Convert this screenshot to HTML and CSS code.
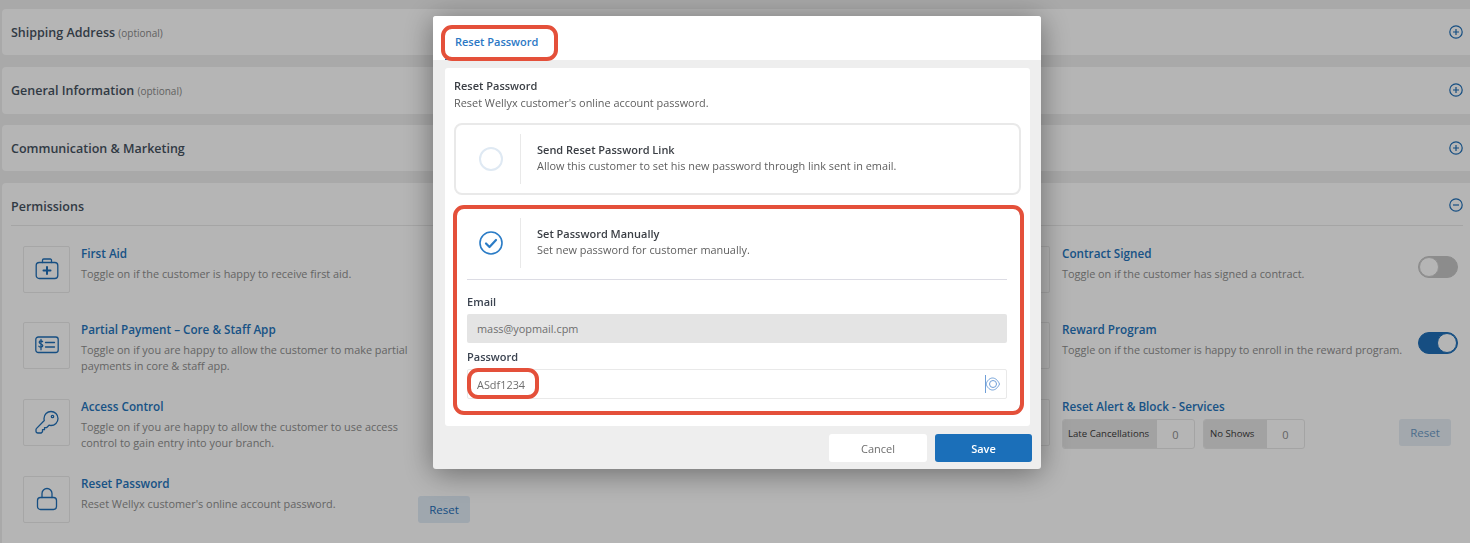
FILE: index.html
```html
<!DOCTYPE html>
<html lang="en">
<head>
<meta charset="utf-8">
<title>Reset Password</title>
<link rel="stylesheet" href="styles.css">
</head>
<body>
<main class="page">
  <section class="card card-a"><h2 class="card-title">Shipping Address <small>(optional)</small></h2>
    <svg class="circle-icon" viewBox="0 0 14 14"><circle cx="7" cy="7" r="6.2"/><path d="M7 4v6M4 7h6"/></svg></section>
  <section class="card card-b"><h2 class="card-title">General Information <small>(optional)</small></h2>
    <svg class="circle-icon" viewBox="0 0 14 14"><circle cx="7" cy="7" r="6.2"/><path d="M7 4v6M4 7h6"/></svg></section>
  <section class="card card-a"><h2 class="card-title">Communication &amp; Marketing</h2>
    <svg class="circle-icon" viewBox="0 0 14 14"><circle cx="7" cy="7" r="6.2"/><path d="M7 4v6M4 7h6"/></svg></section>
  <section class="card-perm">
    <div class="perm-head"><h2 class="card-title">Permissions</h2>
      <svg class="circle-icon" viewBox="0 0 14 14"><circle cx="7" cy="7" r="6.2"/><path d="M4 7h6"/></svg></div>
    <div class="perm-grid">
      <div class="perm">
        <div class="perm-box"><svg class="perm-icon" viewBox="0 0 24 24"><rect x="1.2" y="5.5" width="21.6" height="16" rx="3"/><path d="M7.5 5.5V3.2a1.2 1.2 0 0 1 1.2-1.2h6.6a1.2 1.2 0 0 1 1.2 1.2v2.3"/><path class="thick" d="M12 10v7M8.5 13.5h7"/></svg></div>
        <div class="perm-text"><h3>First Aid</h3><p>Toggle on if the customer is happy to receive first aid.</p></div>
      </div>
      <div></div>
      <div class="perm perm-right">
        <div class="perm-box"></div>
        <div class="perm-text"><h3>Contract Signed</h3><p>Toggle on if the customer has signed a contract.</p></div>
        <span class="toggle"><span class="knob"></span></span>
      </div>
      <div class="perm">
        <div class="perm-box"><svg class="perm-icon" viewBox="0 0 24 18"><rect x="0.8" y="1" width="22.4" height="15.5" rx="2.5"/><path d="M7.6 5.6C7 4.6 4.2 4.4 4.2 6.3c0 2.2 3.6 1.2 3.6 3.3 0 2-3 1.8-3.9.7M6 3.4v10.4M10.5 6.5h9M10.5 11h9"/></svg></div>
        <div class="perm-text"><h3>Partial Payment – Core &amp; Staff App</h3><p>Toggle on if you are happy to allow the customer to make partial payments in core &amp; staff app.</p></div>
      </div>
      <div></div>
      <div class="perm perm-right">
        <div class="perm-box"></div>
        <div class="perm-text"><h3>Reward Program</h3><p>Toggle on if the customer is happy to enroll in the reward program.</p></div>
        <span class="toggle toggle-on"><span class="knob"></span></span>
      </div>
      <div class="perm">
        <div class="perm-box"><svg class="perm-icon" viewBox="0 0 24 24"><path d="M9 8.5a7 7 0 1 1 7 7c-.7 0-1.4-.1-2-.3L11.500 17.700H9.500v2H7.500v2l-1.300 1.300H2.800A1.800 1.800 0 0 1 1 21.200v-1.500c0-.5.2-1 .6-1.300l7.700-7.900A7 7 0 0 1 9 8.500Z"/><circle cx="17.500" cy="6.500" r="1.200"/></svg></div>
        <div class="perm-text"><h3>Access Control</h3><p>Toggle on if you are happy to allow the customer to use access control to gain entry into your branch.</p></div>
      </div>
      <div></div>
      <div class="perm perm-right">
        <div class="perm-box"></div>
        <div class="perm-text perm-text-full"><h3>Reset Alert &amp; Block - Services</h3>
          <div class="counters">
            <div class="counter"><span class="counter-label">Late Cancellations</span><span class="counter-value">0</span></div>
            <div class="counter"><span class="counter-label counter-label-short">No Shows</span><span class="counter-value">0</span></div>
            <button class="reset reset-faded" type="button">Reset</button>
          </div>
        </div>
      </div>
      <div class="perm">
        <div class="perm-box"><svg class="perm-icon" viewBox="0 0 24 24"><rect x="2.500" y="10.500" width="19" height="12" rx="3"/><path d="M7 10.500V6.500a5 5 0 0 1 10 0v4"/></svg></div>
        <div class="perm-text"><h3>Reset Password</h3><p>Reset Wellyx customer's online account password.</p></div>
        <button class="reset reset-end" type="button">Reset</button>
      </div>
    </div>
  </section>
</main>

<div class="overlay">
  <div class="modal">
    <header class="modal-head">
      <span class="tab">Reset Password</span>
      <span class="mark mark-tab"></span>
    </header>
    <div class="modal-body">
      <div class="panel">
        <h4 class="panel-title">Reset Password</h4>
        <p class="panel-desc">Reset Wellyx customer's online account password.</p>
        <div class="option">
          <div class="option-row">
            <span class="radio"></span>
            <div class="option-text"><h5>Send Reset Password Link</h5><p>Allow this customer to set his new password through link sent in email.</p></div>
          </div>
        </div>
        <div class="option option-selected">
          <div class="option-row">
            <svg class="radio-checked" viewBox="0 0 24 24"><circle cx="12" cy="12" r="11"/><path class="check" d="M7 12.500l3.500 3.500 6.500-7"/></svg>
            <div class="option-text"><h5>Set Password Manually</h5><p>Set new password for customer manually.</p></div>
          </div>
          <div class="option-form">
            <label class="field-label">Email</label>
            <div class="input input-disabled">mass@yopmail.cpm</div>
            <label class="field-label">Password</label>
            <div class="input input-password">ASdf1234
              <svg class="eye" viewBox="0 0 15 18"><path d="M.5 0v18"/><path d="M1 9C4 1 11 1 14.500 9 11 17 4 17 1 9Z"/><circle cx="8" cy="9" r="3.500"/></svg>
              <span class="mark mark-value"></span>
            </div>
          </div>
          <span class="mark mark-option"></span>
        </div>
      </div>
    </div>
    <footer class="modal-foot">
      <button class="btn btn-cancel" type="button">Cancel</button>
      <button class="btn btn-save" type="button">Save</button>
    </footer>
  </div>
</div>
</body>
</html>
```
FILE: styles.css
```css
* { box-sizing: border-box; }
html, body { margin: 0; height: 100%; overflow: hidden; }
body { background: #eee; font-family: "Open Sans", "Noto Sans", sans-serif; font-size: 12px; color: #333; }
h2, h3, h4, h5, p { margin: 0; }

.page { height: 543px; overflow: hidden; padding: 9px 0 0 2px; display: flex; flex-direction: column; gap: 11.670px; }
.card { flex: none; background: #fff; border-radius: 4px 0 0 4px; display: flex; align-items: center; justify-content: space-between; padding: 0 7px 0 9px; }
.card .card-title { padding-top: 2px; }
.card-a { height: 46px; }
.card-b { height: 47px; }
.card-title { font-size: 12.500px; font-weight: 600; color: #46525f; line-height: 18px; }
.card-title small { font-size: 10px; font-weight: 400; color: #8a8a8a; }
.circle-icon { width: 14px; height: 14px; fill: none; stroke: #1f6fb8; stroke-width: 1.200; }

.card-perm { flex: none; height: 400px; background: #fff; border-radius: 4px 0 0 0; padding: 0 7px 0 9px; }
.perm-head { height: 43px; padding-top: 3px; border-bottom: 1px solid #e9e9e9; display: flex; align-items: center; justify-content: space-between; }
.perm-head .card-title { padding-top: 3px; }
.perm-grid { display: grid; grid-template-columns: repeat(3, 490px); grid-template-rows: 76px 77px 77px 77px; padding: 20px 0 0 12px; }
.perm { display: flex; align-items: flex-start; width: 447px; height: 47px; }
.perm-right { width: 455px; }
.perm-box { flex: none; width: 47px; height: 47px; margin-right: 11px; border: 1px solid #eaeaea; border-radius: 2px; display: flex; align-items: center; justify-content: center; }
.perm-right .perm-box { margin-right: 12px; }
.perm-icon { width: 24px; height: 24px; fill: none; stroke: #1f6fb8; stroke-width: 1.300; stroke-linecap: round; stroke-linejoin: round; }
.perm-icon .thick { stroke-width: 2; }
.perm-text { flex: 1; min-width: 0; max-width: 345px; }
.perm-text-full { max-width: none; }
.perm-text h3 { font-size: 11.700px; font-weight: 600; line-height: 15px; color: #2474bc; margin-bottom: 5px; }
.perm-text p { font-size: 10.900px; line-height: 16.400px; color: #8e8e8e; }

.toggle { flex: none; margin: 10px 0 0 auto; width: 40px; height: 22px; border-radius: 11px; background: #c6c6c6; border: 1px solid #c6c6c6; display: flex; }
.knob { width: 20px; height: 20px; border-radius: 50%; background: #fff; border: 1px solid #ccc; }
.toggle-on { background: #1f6fb8; border-color: #1f6fb8; justify-content: flex-end; }
.toggle-on .knob { border-color: #1f6fb8; }

.reset { flex: none; width: 52px; height: 27px; padding: 0; border: 0; border-radius: 3px; font: 400 11.500px "Open Sans", sans-serif; background: #e0ebf6; color: #1f6fb8; }
.reset-end { margin: 20px 0 0 auto; }
.reset-faded { margin-left: auto; margin-right: 7px; background: #e6edf4; color: #6d9bc6; }
.counters { display: flex; gap: 8px; align-items: flex-start; }
.counter { display: flex; height: 30px; border: 1px solid #e8e8e8; border-radius: 3px; overflow: hidden; }
.counter-label { width: 94px; background: #e4e4e4; padding-left: 5px; font-size: 9.600px; font-weight: 500; line-height: 27px; color: #3b3b3b; }
.counter-label-short { width: 63px; padding-left: 6px; }
.counter-value { width: 37px; text-align: center; line-height: 30px; font-size: 11px; color: #8e8e8e; }

.overlay { position: fixed; inset: 0; background: rgba(0, 0, 0, .29); }
.modal { position: absolute; left: 433px; top: 16px; width: 608px; height: 453px; background: #eee; border-radius: 3px; box-shadow: 0 4px 30px rgba(0, 0, 0, .42); }
.modal-head { position: relative; height: 44px; background: #fff; border-radius: 3px 3px 0 0; padding-left: 12px; }
.tab { display: inline-block; height: 44px; padding: 18px 10px 0 10px; border-bottom: 1px solid #1b6fb9; font-size: 11px; font-weight: 600; line-height: 16px; color: #2b78c5; }
.modal-body { padding: 8px 11px 0 12px; }
.panel { height: 358px; background: #fff; border-radius: 3px; padding: 10px 9px 0; }
.panel-title { font-size: 11px; font-weight: 600; line-height: 16px; color: #3b3f45; }
.panel-desc { font-size: 10.900px; line-height: 17px; color: #5e5e5e; }
.option { position: relative; margin-top: 12px; height: 72px; border: 2px solid #e9e9e9; border-radius: 8px; }
.option-row { display: flex; align-items: center; padding: 9px 0 0 23px; }
.radio { flex: none; width: 24px; height: 24px; border: 2px solid #dfe9f3; border-radius: 50%; }
.radio-checked { flex: none; width: 24px; height: 24px; fill: none; stroke: #2b7cc6; stroke-width: 1.600; stroke-linecap: round; stroke-linejoin: round; }
.radio-checked .check { stroke-width: 2.200; }
.option-text { margin-left: 17px; padding: 0 0 2px 16px; height: 50px; border-left: 1px solid #e9e9e9; display: flex; flex-direction: column; justify-content: center; }
.option-text h5 { font-size: 11px; font-weight: 600; line-height: 16px; color: #3b3f45; }
.option-text p { font-size: 10.900px; line-height: 16.500px; color: #5e5e5e; }
.option-selected { height: 206px; border-color: #fff #2b6fb5 #fff #fff; border-right-width: 1px; }
.option-form { margin: 11px 13px 0 11px; padding-top: 14px; border-top: 1px solid #dcdce4; }
.field-label { display: block; font-size: 11px; font-weight: 600; line-height: 16px; color: #3b4350; }
.input { position: relative; display: flex; align-items: center; justify-content: space-between; height: 29px; padding: 0 6px 0 10px; font-size: 10.900px; border-radius: 2px; color: #6e6e6e; }
.input-disabled { background: #e4e4e4; margin: 4px 0 6px; }
.input-password { height: 30px; margin-top: 4px; border: 1px solid #e9e9e9; padding-left: 9px; }
.eye { width: 15px; height: 18px; fill: none; stroke: #6f9fd8; stroke-width: 1; }

.mark { position: absolute; border: 4px solid #e4503a; border-radius: 11px; pointer-events: none; }
.mark-tab { left: 8px; top: 9px; width: 117px; height: 36px; }
.mark-option { left: -3px; top: -4px; right: -4px; bottom: -4px; }
.mark-value { left: -1px; top: -2px; width: 72px; height: 31px; }

.modal-foot { display: flex; justify-content: flex-end; gap: 8px; padding: 8px 9px 0 0; }
.btn { width: 98px; height: 28px; padding: 0; border: 0; border-radius: 3px; font: 400 11px "Open Sans", sans-serif; }
.btn-cancel { background: #fff; color: #6e6e6e; }
.btn-save { width: 97px; background: #1b6fb9; color: #fff; font-weight: 600; }
```
